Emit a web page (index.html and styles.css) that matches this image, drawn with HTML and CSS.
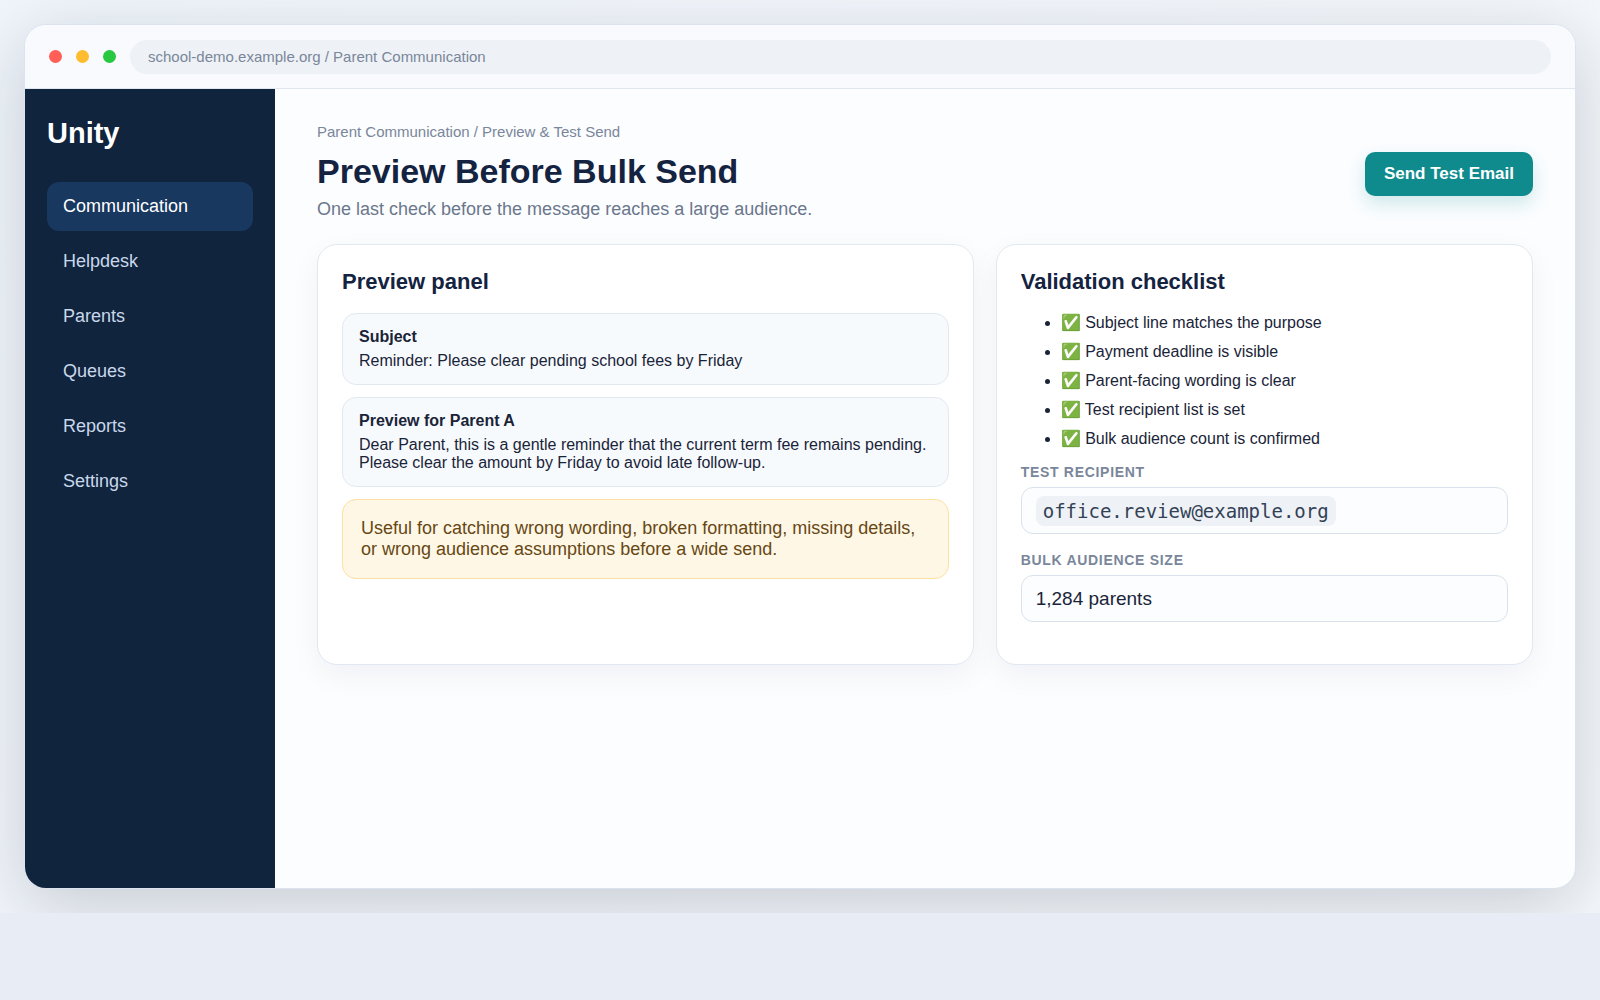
FILE: index.html
```html
<!DOCTYPE html>
<html lang="en">
<head>
    <meta charset="UTF-8">
    <meta name="viewport" content="width=device-width, initial-scale=1.0">
    <title>Preview Before Bulk Send</title>
    <link rel="stylesheet" href="styles.css">
</head>
<body>
    <div class="stage">
        <div class="window">
            <div class="topbar">
                <span class="dot red"></span>
                <span class="dot yellow"></span>
                <span class="dot green"></span>
                <div class="address">school-demo.example.org / Parent Communication</div>
            </div>

            <div class="layout">
                <aside class="sidebar">
                    <div class="brand">Unity</div>
                    <nav>
                        <a class="nav-item active">Communication</a>
                        <a class="nav-item">Helpdesk</a>
                        <a class="nav-item">Parents</a>
                        <a class="nav-item">Queues</a>
                        <a class="nav-item">Reports</a>
                        <a class="nav-item">Settings</a>
                    </nav>
                </aside>

                <main class="main">
                    <header class="header">
                        <div>
                            <div class="crumbs">Parent Communication / Preview &amp; Test Send</div>
                            <h1>Preview Before Bulk Send</h1>
                            <div class="subtitle">One last check before the message reaches a large audience.</div>
                        </div>
                        <button class="btn">Send Test Email</button>
                    </header>

                    <div class="grid">
                        <section class="card">
                            <h2>Preview panel</h2>
                            <div class="item">
                                <strong>Subject</strong>
                                Reminder: Please clear pending school fees by Friday
                            </div>
                            <div class="item">
                                <strong>Preview for Parent A</strong>
                                Dear Parent, this is a gentle reminder that the current term fee remains pending. Please clear the amount by Friday to avoid late follow-up.
                            </div>
                            <div class="note">Useful for catching wrong wording, broken formatting, missing details, or wrong audience assumptions before a wide send.</div>
                        </section>

                        <section class="card">
                            <h2>Validation checklist</h2>
                            <ul class="checklist">
                                <li>✅ Subject line matches the purpose</li>
                                <li>✅ Payment deadline is visible</li>
                                <li>✅ Parent-facing wording is clear</li>
                                <li>✅ Test recipient list is set</li>
                                <li>✅ Bulk audience count is confirmed</li>
                            </ul>
                            <div class="label">Test recipient</div>
                            <div class="field"><code>office.review@example.org</code></div>
                            <div class="label">Bulk audience size</div>
                            <div class="field">1,284 parents</div>
                        </section>
                    </div>
                </main>
            </div>
        </div>
    </div>
</body>
</html>
```
FILE: styles.css
```css
* {
    box-sizing: border-box;
}

body {
    margin: 0;
    font-family: "Liberation Sans", Arial, sans-serif;
    background: #e8edf5;
    color: #1a2438;
}

.stage {
    height: 913px;
    padding: 24px;
    overflow: hidden;
    background: linear-gradient(135deg, #f0f5fb, #f5f8fb);
}

.window {
    height: 865px;
    display: flex;
    flex-direction: column;
    border: 1px solid #dbe3ef;
    border-radius: 22px;
    background: #fbfdff;
    box-shadow: 0 18px 70px rgba(15, 23, 42, 0.19);
    overflow: hidden;
}

.topbar {
    height: 64px;
    display: flex;
    align-items: center;
    gap: 14px;
    padding: 0 24px;
    background: #f8fafd;
    border-bottom: 1px solid #dfe6f0;
}

.dot {
    width: 13px;
    height: 13px;
    border-radius: 50%;
}

.red {
    background: #ff5f57;
}

.yellow {
    background: #febc2e;
}

.green {
    background: #28c840;
}

.address {
    flex: 1;
    height: 34px;
    line-height: 34px;
    padding: 0 18px;
    border-radius: 17px;
    background: #eef2f6;
    color: #7a869a;
    font-size: 15px;
}

.layout {
    flex: 1;
    display: grid;
    grid-template-columns: 250px 1fr;
}

.sidebar {
    padding: 26px 22px;
    background: #10243e;
    color: #fff;
}

.brand {
    font-size: 29px;
    font-weight: 700;
    line-height: 37px;
    margin-bottom: 30px;
}

.nav-item {
    display: block;
    padding: 14px 16px;
    margin-bottom: 6px;
    border-radius: 12px;
    color: #c9d8ea;
    font-size: 18px;
    line-height: 21px;
}

.nav-item.active {
    background: #19385f;
    color: #fff;
}

.main {
    padding: 34px 42px;
}

.header {
    display: flex;
    justify-content: space-between;
    align-items: center;
    margin-bottom: 19px;
}

.crumbs {
    color: #7a869a;
    font-size: 15px;
    line-height: 17px;
    margin-bottom: 12px;
}

h1 {
    margin: 0 0 8px;
    color: #14233f;
    font-size: 34px;
    line-height: 39px;
}

.subtitle {
    margin-bottom: 5px;
    color: #6b778c;
    font-size: 18px;
    line-height: 21px;
}

.btn {
    height: 44px;
    padding: 0 19px;
    border: 0;
    border-radius: 10px;
    background: #0f8b8d;
    color: #fff;
    font-family: inherit;
    font-size: 17px;
    font-weight: 700;
    box-shadow: 0 8px 18px rgba(15, 139, 141, 0.18);
}

.grid {
    display: grid;
    grid-template-columns: 1.1fr 0.9fr;
    gap: 22px;
}

.card {
    padding: 24px;
    border: 1px solid #e2e8f2;
    border-radius: 20px;
    background: #fff;
    box-shadow: 0 10px 30px rgba(15, 23, 42, 0.05);
}

h2 {
    margin: 0 0 18px;
    color: #14233f;
    font-size: 22px;
    line-height: 26px;
}

.item {
    padding: 14px 16px;
    margin-bottom: 12px;
    border: 1px solid #e2e9f1;
    border-radius: 14px;
    background: #f7fafd;
    font-size: 16px;
    line-height: 18px;
}

.item strong {
    display: block;
    margin-bottom: 6px;
}

.note {
    padding: 18px;
    border: 1px solid #ffe0a0;
    border-radius: 14px;
    background: #fff7e6;
    color: #664814;
    font-size: 18px;
    line-height: 21px;
}

.checklist {
    margin: 0 0 16px;
    padding-left: 40px;
    font-size: 16px;
    line-height: 19px;
}

.checklist li + li {
    margin-top: 10px;
}

.label {
    margin-bottom: 7px;
    color: #7a869a;
    font-size: 14px;
    font-weight: 700;
    line-height: 16px;
    letter-spacing: 0.7px;
    text-transform: uppercase;
}

.field {
    height: 47px;
    display: flex;
    align-items: center;
    margin-bottom: 18px;
    padding: 0 14px;
    border: 1px solid #d9e2ec;
    border-radius: 12px;
    background: #fbfdff;
    font-size: 19px;
}

.field code {
    padding: 4px 7px;
    border-radius: 8px;
    background: #eef2f7;
    color: #334155;
    font-family: "DejaVu Sans Mono", monospace;
    font-size: 19px;
    line-height: 22px;
}
```
